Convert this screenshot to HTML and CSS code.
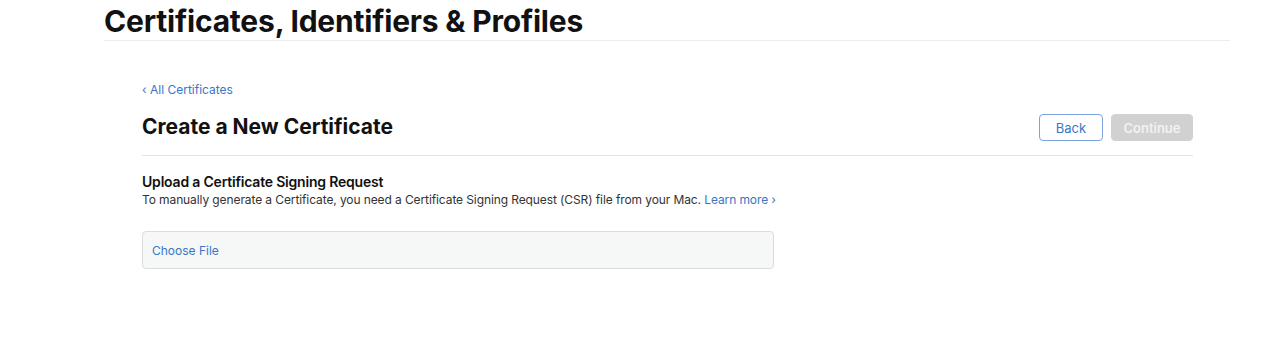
FILE: index.html
```html
<!DOCTYPE html>
<html lang="en">
<head>
  <meta charset="UTF-8" />
  <title>Certificates, Identifiers &amp; Profiles</title>
  <link rel="stylesheet" href="styles.css">
</head>
<body>

<header class="page-header">
  <h1>Certificates, Identifiers &amp; Profiles</h1>
</header>

<main class="content">
  <a class="back-link" href="#">&lsaquo; All Certificates</a>

  <div class="title-row">
    <h2>Create a New Certificate</h2>
    <div class="actions">
      <button class="btn btn-outline">Back</button>
      <button class="btn btn-disabled" disabled>Continue</button>
    </div>
  </div>

  <section class="upload">
    <h3>Upload a Certificate Signing Request</h3>
    <p>To manually generate a Certificate, you need a Certificate Signing Request (CSR) file from your Mac. <a href="#">Learn more &rsaquo;</a></p>

    <label class="file-box">
      <span class="choose">Choose File</span>
    </label>
  </section>
</main>

</body>
</html>
```

FILE: styles.css
```css
body {
  margin: 0;
  font-family: Inter, "Liberation Sans", Arial, sans-serif;
  color: #1d1d1f;
  background: white;
}
a {
  color: #3a76c7;
  text-decoration: none;
}
.page-header {
  margin-left: 104px;
  width: 1126px;
  border-bottom: 1px solid #ececec;
}
.page-header h1 {
  margin: 0;
  padding-top: 3px;
  font-size: 30px;
  line-height: 37px;
  font-weight: 700;
  letter-spacing: -0.2px;
  color: #111;
}
.content {
  margin-left: 142px;
  width: 1051px;
  padding-top: 41px;
}
.back-link {
  display: block;
  font-size: 12px;
  line-height: 16px;
}
.title-row {
  display: flex;
  justify-content: space-between;
  align-items: flex-end;
  padding: 15px 0 14px;
  border-bottom: 1px solid #e4e4e4;
}
.title-row h2 {
  margin: 0;
  font-size: 21px;
  line-height: 28px;
  font-weight: 700;
  color: #111;
}
.actions {
  display: flex;
  gap: 8px;
}
.btn {
  height: 27px;
  border-radius: 4px;
  font-family: inherit;
  font-size: 13px;
  padding: 0 10px;
}
.btn-outline {
  background: white;
  border: 1px solid #7aa3e0;
  color: #3a76c7;
  width: 64px;
}
.btn-disabled {
  background: #d1d1d1;
  border: 1px solid #d1d1d1;
  color: #f2f2f2;
  width: 82px;
  font-weight: 600;
}
.upload {
  padding-top: 17px;
}
.upload h3 {
  margin: 0;
  font-size: 14px;
  line-height: 18px;
  font-weight: 600;
  letter-spacing: -0.2px;
  color: #111;
}
.upload p {
  margin: 0;
  font-size: 12px;
  line-height: 18px;
  letter-spacing: -0.1px;
  color: #333;
}
.file-box {
  display: flex;
  align-items: center;
  margin-top: 22px;
  width: 621px;
  height: 36px;
  padding-left: 9px;
  background: #f6f7f7;
  border: 1px solid #dcdcdc;
  border-radius: 4px;
  cursor: pointer;
}
.choose {
  font-size: 12px;
  color: #3a76c7;
}
```
